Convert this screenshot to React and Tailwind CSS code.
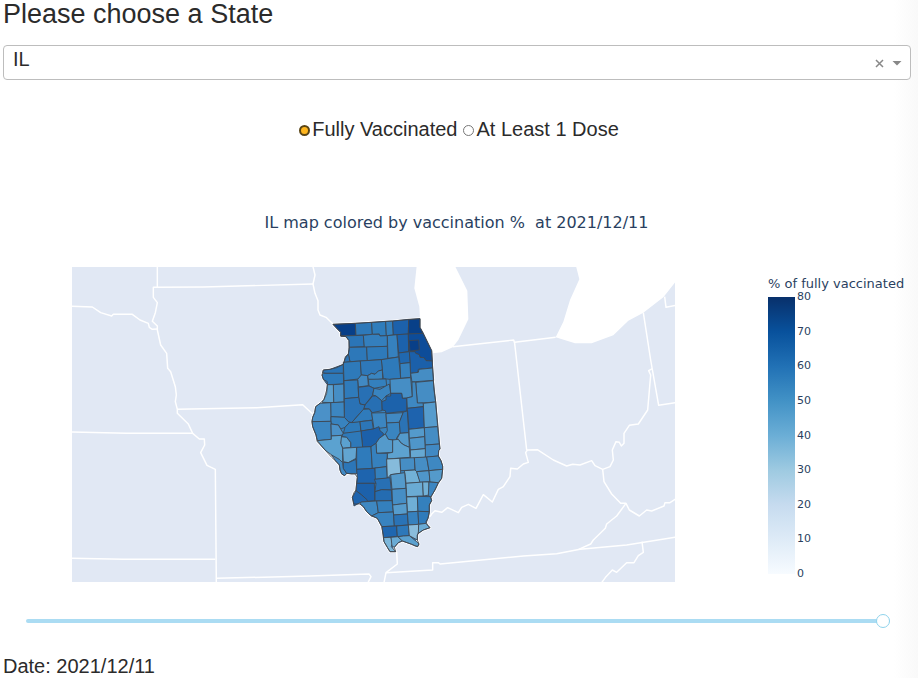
import { useState } from "react";

// County outlines on a 3x grid whose origin is (300, 310) on the map canvas.
const counties = [
  ["Jo Daviess", "#083f88", "99,43 166,40 168,76 122,78 122,67 112,57"],
  ["Stephenson", "#2e79b9", "166,40 215,37 217,73 168,76"],
  ["Winnebago", "#2f7dbb", "215,37 257,34 259,77 240,78 238,72 217,73"],
  ["Boone", "#3480bd", "257,34 278,33 280,75 259,77"],
  ["McHenry", "#1c61ab", "278,33 326,28 325,72 280,75"],
  ["Lake", "#084088", "326,28 360,26 360,52 370,70 325,72"],
  ["Carroll", "#2b75b7", "122,78 190,76 193,110 147,112 147,92 138,80"],
  ["Ogle", "#347fbd", "190,76 217,73 238,73 240,78 262,77 262,109 193,112"],
  ["Whiteside", "#2d78b9", "147,112 200,111 202,152 150,155 145,132"],
  ["Lee", "#2e7aba", "200,111 262,109 263,147 202,152"],
  ["DeKalb", "#3681be", "262,77 291,74 295,141 264,145"],
  ["Kane", "#1c62ac", "291,74 325,72 326,125 296,129"],
  ["Cook", "#0d4c99", "325,72 370,70 395,122 397,153 378,152 372,143 360,142 358,134 347,130 345,125 326,123"],
  ["DuPage", "#083f88", "327,92 356,90 358,120 330,123"],
  ["Will", "#1b60aa", "328,125 345,125 347,130 358,134 360,142 372,143 378,152 397,153 398,174 355,178 353,187 332,190 330,158"],
  ["Kendall", "#2068b0", "296,129 328,125 330,158 300,161"],
  ["Grundy", "#3681be", "300,161 330,158 332,202 302,205"],
  ["LaSalle", "#2e7aba", "244,149 296,141 302,205 270,208 250,206 247,180"],
  ["Kankakee", "#458dc4", "332,190 355,187 357,178 398,174 401,211 347,215 336,216"],
  ["Rock Island", "#2a74b6", "70,180 90,178 130,163 136,140 145,132 150,155 130,158 130,190 78,190 68,188"],
  ["Mercer", "#2e7aba", "70,190 130,190 131,222 82,224 70,208 66,195"],
  ["Henry", "#2e7aba", "130,157 181,153 184,195 175,207 132,212"],
  ["Bureau", "#2e78b9", "181,153 244,149 247,180 235,183 225,193 215,190 203,197 184,195"],
  ["Stark", "#4189c3", "173,208 184,195 203,197 205,227 175,231"],
  ["Putnam", "#3a85c0", "203,197 215,190 225,193 235,183 247,180 248,207 230,209 205,208"],
  ["Marshall", "#3480bd", "205,208 258,207 260,228 222,235 207,228"],
  ["Knox", "#2f7bbb", "132,212 173,210 176,262 133,266"],
  ["Warren", "#468ec5", "100,224 131,222 132,276 101,278"],
  ["Henderson", "#5ba0cf", "82,224 100,224 101,278 66,277 72,268 80,250"],
  ["Peoria", "#2870b4", "175,232 207,228 222,235 218,255 195,285 180,282 176,262"],
  ["Woodford", "#3984c0", "222,235 240,238 268,222 272,250 258,258 245,272 228,258 218,255"],
  ["Livingston", "#468ec5", "270,208 332,203 337,260 320,264 307,265 305,250 272,250"],
  ["Iroquois", "#458dc4", "347,217 400,212 407,276 352,280"],
  ["Ford", "#3e88c2", "336,216 347,216 352,279 370,279 370,290 322,295 320,264 337,260"],
  ["McLean", "#1c62ab", "245,275 258,270 258,258 272,258 272,250 305,250 307,265 320,265 320,303 258,310 256,302 246,300"],
  ["Tazewell", "#276fb3", "195,285 218,258 228,258 245,272 246,302 217,308 208,297 190,295"],
  ["Fulton", "#2a72b5", "133,266 176,262 180,282 195,285 190,300 178,312 155,338 145,335 133,322"],
  ["McDonough", "#3c86c1", "92,278 132,276 133,322 92,320"],
  ["Hancock", "#4b91c8", "60,280 92,278 93,334 36,335 38,322 44,308 47,290"],
  ["Schuyler", "#3883bf", "93,320 133,322 148,338 135,352 122,357 115,345 93,342"],
  ["Adams", "#3c86c1", "36,335 93,334 94,388 52,392 48,375 38,350"],
  ["Brown", "#4b91c8", "93,342 115,345 122,357 130,370 125,376 94,378"],
  ["Cass", "#2e7aba", "148,338 180,334 183,368 130,370 135,352"],
  ["Mason", "#2f7bbb", "178,312 190,298 208,297 215,308 218,330 180,335 155,338"],
  ["Menard", "#2c76b8", "180,335 216,331 220,357 183,363"],
  ["Logan", "#3c86c1", "215,309 258,308 260,352 222,357"],
  ["De Witt", "#4189c3", "258,311 310,308 298,337 260,339"],
  ["Piatt", "#2b73b5", "310,306 322,303 326,368 300,370 298,337"],
  ["Champaign", "#1e63ae", "322,295 370,290 373,353 327,358"],
  ["Vermilion", "#569ccd", "370,280 407,276 413,350 373,353"],
  ["Sangamon", "#1c60aa", "183,363 220,357 237,350 240,362 250,370 250,375 238,385 228,400 213,410 188,412"],
  ["Macon", "#3a85c0", "260,339 298,337 300,368 290,384 288,391 265,388 256,372 262,362"],
  ["Christian", "#549acb", "228,400 238,385 256,372 265,388 278,390 278,427 230,430"],
  ["Moultrie", "#549acb", "300,370 326,368 328,412 312,405 302,398 295,388 290,388"],
  ["Shelby", "#5da2d0", "278,390 295,388 302,398 312,405 328,412 330,442 262,447 262,430 278,427"],
  ["Douglas", "#549acb", "327,358 373,353 374,380 328,385"],
  ["Coles", "#4f96ca", "328,385 374,380 376,416 331,420"],
  ["Edgar", "#458dc4", "373,353 413,350 418,402 376,405"],
  ["Clark", "#4189c3", "376,405 418,402 420,417 416,422 415,438 375,442"],
  ["Cumberland", "#66a8d2", "331,420 376,416 376,442 332,446"],
  ["Morgan", "#2e79b9", "130,370 183,363 188,412 152,415 152,398 140,382 125,380"],
  ["Scott", "#5ba1cf", "122,380 140,382 152,398 152,412 128,415 122,400"],
  ["Pike", "#5ba2d0", "52,392 94,388 94,378 125,376 122,400 128,415 128,455 118,455 95,435 75,420"],
  ["Greene", "#62a5d1", "128,415 170,412 168,445 145,458 130,455"],
  ["Calhoun", "#4189c3", "95,435 118,448 128,458 130,475 140,490 134,497 125,492 120,480 118,465 107,453"],
  ["Jersey", "#2c76b8", "130,457 145,458 168,448 170,478 172,490 155,492 140,490 130,475"],
  ["Macoupin", "#2f7bbb", "170,412 213,410 217,475 170,478"],
  ["Montgomery", "#3681be", "213,410 228,400 230,430 262,430 260,470 217,475"],
  ["Madison", "#1e64ae", "170,478 225,475 228,520 170,520 172,502"],
  ["Bond", "#3580bd", "225,474 260,470 262,505 226,508"],
  ["Fayette", "#86bbdb", "260,447 300,445 302,490 272,494 262,505"],
  ["Effingham", "#468ec5", "300,445 343,443 345,480 302,482"],
  ["Jasper", "#468ec5", "343,443 380,441 387,482 346,485"],
  ["Crawford", "#3e88c2", "380,441 415,438 423,452 428,468 428,478 387,482"],
  ["Clay", "#72b1d7", "313,482 345,480 350,485 362,517 318,520 316,500"],
  ["Richland", "#4f96ca", "350,485 387,482 390,515 360,517"],
  ["Lawrence", "#549acb", "387,482 428,478 425,505 415,518 390,516"],
  ["Marion", "#549acb", "272,494 314,488 318,535 276,538"],
  ["Wayne", "#6aabd4", "318,520 368,516 370,558 320,560"],
  ["Edwards", "#72b1d7", "368,516 387,516 388,555 370,558"],
  ["Wabash", "#3c86c1", "387,516 415,518 405,540 392,562 385,556"],
  ["Clinton", "#2870b4", "228,520 223,508 270,503 274,540 245,539 225,545"],
  ["St. Clair", "#1c61ab", "170,520 223,520 225,572 202,574 185,555 168,542"],
  ["Monroe", "#1e64ae", "168,542 185,555 202,570 200,575 180,578 162,588 157,562"],
  ["Washington", "#246cb1", "225,545 245,539 274,540 276,572 225,573"],
  ["Jefferson", "#468ec5", "276,538 318,535 320,580 278,585"],
  ["Hamilton", "#6fafd6", "320,561 352,560 354,604 322,606"],
  ["White", "#3480bd", "352,559 392,560 395,572 388,585 388,605 354,604"],
  ["Randolph", "#3e88c2", "183,576 230,573 235,608 215,618 200,605 190,590 180,582"],
  ["Perry", "#3480bd", "230,573 276,572 280,606 235,608"],
  ["Franklin", "#569ccd", "278,585 320,580 322,612 281,615"],
  ["Jackson", "#3883bf", "235,608 280,606 283,648 246,650 232,625 215,618"],
  ["Williamson", "#2a73b6", "281,615 322,612 325,645 283,648"],
  ["Saline", "#3681be", "322,606 354,604 356,643 325,645"],
  ["Gallatin", "#2f7bbb", "354,604 388,605 384,625 378,640 356,643"],
  ["Union", "#1f67b0", "246,650 290,648 292,679 250,683"],
  ["Johnson", "#2d78b9", "290,648 325,645 328,677 292,680"],
  ["Pope", "#8abddc", "325,645 356,643 356,665 352,675 352,690 328,677"],
  ["Hardin", "#6aabd4", "356,643 378,640 390,653 370,660 355,670"],
  ["Alexander", "#7cb7da", "250,683 273,682 277,700 274,710 287,725 270,725 262,712 252,695"],
  ["Pulaski", "#6aabd4", "273,682 294,680 307,693 295,698 283,712 276,708"],
  ["Massac", "#5ba1cf", "294,680 310,678 328,677 350,695 357,702 353,710 335,703 307,693"],
];

const illinois =
  "99,43 166,40 215,37 278,33 360,26 360,52 370,72 395,122 398,175 402,240 407,275 414,350 420,417 416,422 415,438 423,452 428,468 428,478 425,505 415,520 405,540 392,562 395,572 388,585 388,608 384,625 378,635 382,645 390,653 370,660 358,668 352,675 352,690 357,702 353,710 345,708 335,703 307,693 295,698 283,712 287,725 270,725 262,712 252,695 250,675 245,650 232,625 210,615 200,605 190,590 180,582 162,582 157,562 162,548 168,540 170,518 172,502 165,492 140,490 134,497 125,492 120,480 118,465 107,453 95,442 75,420 52,395 48,375 38,350 36,335 38,322 44,308 47,290 60,280 72,268 80,240 82,225 82,215 70,208 66,195 70,180 90,178 110,173 130,163 136,145 145,132 148,118 147,92 138,80 122,78 122,67 112,57";

const westBorders = [
  "262,20 262,82 250,82 250,112 262,128 256,158 247,184 262,198 262,210 272,255 290,280 293,325 302,335 316,380 319,405 316,425 322,448 322,460 355,492 368,520 388,537 403,537 404,555 392,578 411,616 436,628 439,968",
  "262,82 400,81 729,72",
  "6,139 67,141 92,158 125,168 130,163 187,163 210,180 235,190 238,202 247,208 262,207",
  "322,448 560,443 698,434 728,462",
  "6,516 170,520 366,520",
  "6,895 160,898 436,898",
  "439,955 720,948 897,942 903,950 894,968",
  "729,20 735,45 729,72 735,100 744,122 744,150 750,165 768,172 789,192",
];

const eastBorders = [
  "218,260 401,240 404,250 440,570",
  "404,247 527,232",
  "790,158 812,300 836,436 888,428",
  "854,110 858,142 888,136",
  "150,770 155,762 165,752 185,757 203,743 235,758 245,742 265,733 288,745 310,704 337,726 355,688 370,680 390,650 392,625 412,627 430,612 445,607 437,578 442,570 472,569 520,600 560,618 578,613 600,615 635,602 645,617 668,628 690,620 700,600 697,570 708,545 718,547 724,558 732,550 732,520 748,496 775,492 803,450 812,345 806,332 817,326",
  "668,628 672,665 695,702 722,730 738,730 748,750 778,768 800,750 815,753 852,738 855,728 870,728 888,716",
  "738,730 710,768 680,792 676,805 640,840 632,852 596,868",
  "50,875 52,912 18,938 12,968",
  "18,938 158,930 158,908 175,908 180,912 430,888 530,881 600,868 740,855 888,831",
  "786,845 790,877 775,887 762,908 740,908 710,937 697,930 678,950 665,968",
];

const lakes = [
  "110,18 103,85 118,140 120,176 122,215 158,280 185,277 218,262 235,240 265,178 262,92 225,18",
  "588,18 598,58 570,120 550,185 527,232 585,250 635,250 700,226 745,182 790,158 850,112 888,64 888,18",
];

const ticks = [80, 70, 60, 50, 40, 30, 20, 10, 0];

function StateMap() {
  return (
    <svg viewBox="72 267 603 315" className="block w-full" role="img" aria-label="Illinois counties colored by vaccination rate">
      <rect x="72" y="267" width="603" height="315" fill="#e1e8f4" />
      <g transform="translate(380 260) scale(0.33333)" fill="#fff">
        {lakes.map((p) => (
          <polygon key={p} points={p} />
        ))}
      </g>
      <g fill="none" stroke="#fff" strokeWidth="4.4" strokeLinejoin="round">
        <g transform="translate(70 260) scale(0.33333)">
          {westBorders.map((p) => (
            <polyline key={p} points={p} />
          ))}
        </g>
        <g transform="translate(380 260) scale(0.33333)">
          {eastBorders.map((p) => (
            <polyline key={p} points={p} />
          ))}
        </g>
      </g>
      <g transform="translate(300 310) scale(0.33333)" strokeLinejoin="round">
        <polygon points={illinois} fill="#3883bf" stroke="#fff" strokeWidth="8" />
        <g stroke="#3d4650" strokeWidth="2.6">
          {counties.map(([name, fill, points]) => (
            <polygon key={name} fill={fill} points={points} />
          ))}
        </g>
        <polygon points={illinois} fill="none" stroke="#3d4650" strokeWidth="2.6" />
      </g>
    </svg>
  );
}

const radioClass =
  "mt-[2px] h-[11px] w-[11px] shrink-0 appearance-none rounded-full border border-[#777] bg-white checked:border-2 checked:border-[#5a4515] checked:bg-[#ffb61e]";

export default function App() {
  const [state, setState] = useState("IL");
  const [dose, setDose] = useState("full");
  const [day, setDay] = useState(100);

  return (
    <main className="bg-[linear-gradient(to_left,#f9f9f9,#ffffff_24px)] font-['Liberation_Sans',Arial,sans-serif] text-[#2b2b2b]">
      <label htmlFor="state" className="block px-[3px] text-[27px] leading-[28px]">
        Please choose a State
      </label>
      <div className="mt-[17px] mr-[7px] ml-[3px] flex h-[35px] items-center rounded-[4px] border border-[#bdbdbd] bg-white pr-[8px]">
        <select
          id="state"
          value={state}
          onChange={(e) => setState(e.target.value)}
          className="h-full flex-1 appearance-none bg-transparent pb-[7px] pl-[9px] text-[20px] leading-[24px] outline-none"
        >
          <option>IL</option>
        </select>
        <button type="button" aria-label="Clear" className="p-1 text-[#888]">
          <svg width="9" height="9" viewBox="0 0 9 9" className="mt-[2px] stroke-current" fill="none" strokeWidth="1.5">
            <path d="M1 1L8 8M8 1L1 8" />
          </svg>
        </button>
        <svg width="10" height="5" viewBox="0 0 10 5" className="ml-[4px] mt-[1px]" aria-hidden="true">
          <path d="M0.5 0H9.5L5 4.6Z" fill="#888" />
        </svg>
      </div>

      <fieldset className="mt-[37px] flex items-center justify-center text-[20px] leading-[24px]">
        <label className="flex items-center gap-[2px]">
          <input type="radio" name="dose" checked={dose === "full"} onChange={() => setDose("full")} className={radioClass} />
          Fully Vaccinated
        </label>
        <label className="ml-[6px] flex items-center gap-[2px]">
          <input type="radio" name="dose" checked={dose === "one"} onChange={() => setDose("one")} className={radioClass} />
          At Least 1 Dose
        </label>
      </fieldset>

      <figure className="mt-[72px] font-['DejaVu_Sans',Verdana,sans-serif] text-[#2a3f5f]">
        <figcaption className="pr-[5px] text-center text-[16px] leading-[20px] whitespace-pre">
          IL map colored by vaccination %  at 2021/12/11
        </figcaption>
        <div className="mt-[34px] flex items-start pl-[72px]">
          <div className="min-w-0 flex-1">
            <StateMap />
          </div>
          <div className="ml-[93px] w-[150px] shrink-0 pt-[10px]">
            <div className="text-[13px] leading-[14px] whitespace-nowrap">% of fully vaccinated</div>
            <div className="flex items-center gap-[2px]">
              <div className="h-[277px] w-[27px] bg-[linear-gradient(to_top,#f7fbff_0%,#deebf7_12.5%,#c6dbef_25%,#9ecae1_37.5%,#6baed6_50%,#4292c6_62.5%,#2171b5_75%,#08519c_87.5%,#08306b_100%)]" />
              <div className="flex h-[289px] flex-col justify-between text-[11px] leading-[12px]">
                {ticks.map((t) => (
                  <span key={t}>{t}</span>
                ))}
              </div>
            </div>
          </div>
        </div>
      </figure>

      <div className="mt-[32px] pr-[28px] pl-[26px]">
        <input
          type="range"
          aria-label="Date"
          min="0"
          max="100"
          value={day}
          onChange={(e) => setDay(Number(e.target.value))}
          className="block h-[14px] w-full appearance-none bg-transparent [&::-webkit-slider-runnable-track]:h-[4px] [&::-webkit-slider-runnable-track]:rounded-full [&::-webkit-slider-runnable-track]:bg-[#abdcf3] [&::-webkit-slider-thumb]:mt-[-5px] [&::-webkit-slider-thumb]:h-[14px] [&::-webkit-slider-thumb]:w-[14px] [&::-webkit-slider-thumb]:appearance-none [&::-webkit-slider-thumb]:rounded-full [&::-webkit-slider-thumb]:border [&::-webkit-slider-thumb]:border-[#8fd3ec] [&::-webkit-slider-thumb]:bg-white"
        />
      </div>
      <p className="mt-[26px] px-[3px] text-[20px] leading-[24px]">Date: 2021/12/11</p>
    </main>
  );
}
